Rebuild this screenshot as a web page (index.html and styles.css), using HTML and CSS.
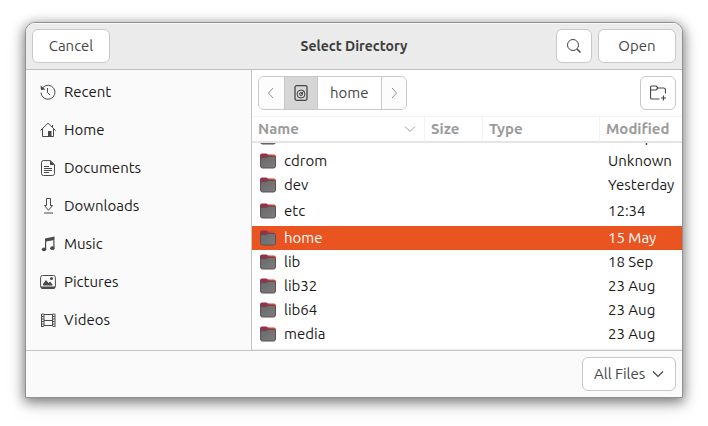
FILE: index.html
```html
<!DOCTYPE html>
<html lang="en">
<head>
<meta charset="utf-8">
<title>Select Directory</title>
<link rel="stylesheet" href="styles.css">
</head>
<body>
<svg class="defs" aria-hidden="true">
  <defs>
    <linearGradient id="tab" x1="0" x2="1"><stop offset="0.4" stop-color="#93304c"/><stop offset="0.6" stop-color="#c63a34"/><stop offset="1" stop-color="#e0562c"/></linearGradient>
    <linearGradient id="body" x1="0" y1="0" x2="1" y2="1"><stop offset="0" stop-color="#686868"/><stop offset="1" stop-color="#7d7d7d"/></linearGradient>
    <symbol id="folder" viewBox="0 0 16 16">
      <path d="M0 2.500Q0 .5 2 .5H6.500L8 1.500H14Q16 1.500 16 3.500V7H0Z" fill="url(#tab)"/>
      <path d="M.5 6Q.5 4.500 2 4.500H6.500L8 3.500H14.500Q15.500 3.500 15.500 4.500V13Q15.500 15 13.500 15H2.500Q.5 15 .5 13Z" fill="url(#body)" stroke="#5f5055"/>
    </symbol>
  </defs>
</svg>
<main class="dialog">
  <header class="titlebar">
    <button class="btn" type="button">Cancel</button>
    <h1 class="title">Select Directory</h1>
    <div class="actions">
      <button class="btn btn-icon" type="button" aria-label="Search">
        <svg class="icon" viewBox="0 0 16 16"><circle cx="7" cy="7" r="5.500"/><path d="M11 11l3.500 3.500" stroke-width="1.500"/></svg>
      </button>
      <button class="btn" type="button">Open</button>
    </div>
  </header>
  <div class="content">
    <nav class="sidebar" aria-label="Places">
      <a class="place" href="#recent"><svg class="icon" viewBox="0 0 16 16"><path d="M2.600 3.800A7 7 0 1 1 1 8.500M7.500 4v4.500l2.500 2.500"/><path class="solid" d="M.5 1.500L1 6l4.500-.5Z"/></svg>Recent</a>
      <a class="place" href="#home"><svg class="icon" viewBox="0 0 16 16"><path d="M.5 8.500L8 1.200l7.500 7.300M12.500 5V3M2.500 7v7.500H13.500V7"/><path class="solid" d="M8 9h3.500v6H8Z"/></svg>Home</a>
      <a class="place" href="#documents"><svg class="icon" viewBox="0 0 16 16"><path d="M3.500.6H10.500L14.500 4.500V13.500Q14.500 15.500 12.500 15.500H3.500Q1.500 15.500 1.500 13.500V2.500Q1.500.6 3.500.6ZM4 6.500h5M4 8.500h8M4 10.500h8M4 12.500h5"/><path class="solid" d="M10 .6L14.500 5H10Z"/></svg>Documents</a>
      <a class="place" href="#downloads"><svg class="icon" viewBox="0 0 16 16"><path d="M6.500.5h4v7h2L8.500 12.300 4.500 7.500h2ZM4 15h9"/></svg>Downloads</a>
      <a class="place" href="#music"><svg class="icon" viewBox="0 0 16 16"><path class="solid" d="M5 2.500L14.500.5V4L6.200 5.500V13H5ZM13.300 3h1.200v9h-1.200Z"/><ellipse class="solid" cx="4" cy="13.300" rx="2.200" ry="1.900"/><ellipse class="solid" cx="12.400" cy="12.200" rx="2.200" ry="1.900"/></svg>Music</a>
      <a class="place" href="#pictures"><svg class="icon" viewBox="0 0 16 16"><rect x=".6" y="1.500" width="14.800" height="12.500" rx="2"/><path class="solid" d="M.5 12.500H15.500Q15.500 15 13.500 15H2.500Q.5 15 .5 12.500ZM3 11.500V10l3-4 2.500 3L10 7.500l2.500 3v1Z"/><circle class="solid" cx="11.500" cy="4.500" r="1.500"/></svg>Pictures</a>
      <a class="place" href="#videos"><svg class="icon" viewBox="0 0 16 16"><path d="M4 2v12M12.500 2v12M4 2.500h8.500M4 8.500h8.500M4 13.500h8.500"/><path d="M1.500 2v13M15 2v13"/><path d="M2.800 1.500v14M13.700 1.500v14" stroke-width="2" stroke-dasharray="1 1.500"/></svg>Videos</a>
    </nav>
    <section class="browser">
      <div class="toolbar">
        <div class="pathbar">
          <button class="crumb arrow" type="button" aria-label="Back"><svg class="icon" viewBox="0 0 16 16"><path d="M10 3L5.500 8l4.500 5"/></svg></button>
          <button class="crumb disk" type="button" aria-label="Computer"><svg class="icon" viewBox="0 0 16 16"><rect x="2" y=".7" width="12" height="14.600" rx="1.500" stroke-width="1.300"/><circle cx="8" cy="9" r="4"/><circle cx="8" cy="9" r="1.500"/><path d="M8 9l3-3"/></svg></button>
          <button class="crumb" type="button">home</button>
          <button class="crumb arrow" type="button" aria-label="Forward"><svg class="icon" viewBox="0 0 16 16"><path d="M6 3L10.500 8l-4.500 5"/></svg></button>
        </div>
        <button class="btn btn-icon" type="button" aria-label="Create Folder">
          <svg class="icon" viewBox="0 0 16 16"><path d="M9.500 14H2Q.5 14 .5 12.500V2.500Q.5 1 2 1H6L8 3H13.500Q15.500 3 15.500 5V8.500M.5 5H6L8 3M13.500 10.500v5M11 13h5" stroke-width="1.200"/></svg>
        </button>
      </div>
      <div class="files">
        <table>
          <colgroup><col class="col-name"><col class="col-size"><col class="col-type"><col class="col-modified"></colgroup>
          <thead>
            <tr>
              <th scope="col"><span class="sorted">Name<svg class="icon" viewBox="0 0 16 16"><path d="M3 5.500L8 10.500l5-5"/></svg></span></th>
              <th scope="col">Size</th><th scope="col">Type</th><th scope="col">Modified</th>
            </tr>
          </thead>
          <tbody>
            <tr><td><span class="name"><svg class="folder"><use href="#folder"/></svg>boot</span></td><td></td><td></td><td>18 Sep</td></tr>
            <tr><td><span class="name"><svg class="folder"><use href="#folder"/></svg>cdrom</span></td><td></td><td></td><td>Unknown</td></tr>
            <tr><td><span class="name"><svg class="folder"><use href="#folder"/></svg>dev</span></td><td></td><td></td><td>Yesterday</td></tr>
            <tr class="tall"><td><span class="name"><svg class="folder"><use href="#folder"/></svg>etc</span></td><td></td><td></td><td>12:34</td></tr>
            <tr class="selected"><td><span class="name"><svg class="folder"><use href="#folder"/></svg>home</span></td><td></td><td></td><td>15 May</td></tr>
            <tr><td><span class="name"><svg class="folder"><use href="#folder"/></svg>lib</span></td><td></td><td></td><td>18 Sep</td></tr>
            <tr><td><span class="name"><svg class="folder"><use href="#folder"/></svg>lib32</span></td><td></td><td></td><td>23 Aug</td></tr>
            <tr><td><span class="name"><svg class="folder"><use href="#folder"/></svg>lib64</span></td><td></td><td></td><td>23 Aug</td></tr>
            <tr><td><span class="name"><svg class="folder"><use href="#folder"/></svg>media</span></td><td></td><td></td><td>23 Aug</td></tr>
          </tbody>
        </table>
      </div>
    </section>
  </div>
  <footer class="footer">
    <div class="filter">
      <select class="btn" aria-label="File filter"><option>All Files</option></select>
      <svg class="icon" viewBox="0 0 16 16"><path d="M3 5.500L8 10.500l5-5" stroke-width="1.200"/></svg>
    </div>
  </footer>
</main>
</body>
</html>
```
FILE: styles.css
```css
* { box-sizing: border-box; }

body {
  margin: 0;
  height: 100vh;
  padding: 22px 25px 28px;
  display: flex;
  background: #fff;
  color: #1a1a1a;
  font: 15px/20px Ubuntu, "Noto Sans", sans-serif;
}

button, select { font: inherit; }

.defs { position: absolute; width: 0; height: 0; }

.icon {
  width: 16px;
  height: 16px;
  flex: none;
  display: block;
  fill: none;
  stroke: currentColor;
  stroke-width: 1;
}
.icon .solid { fill: currentColor; stroke: none; }

.dialog {
  flex: 1;
  min-width: 0;
  display: flex;
  flex-direction: column;
  overflow: hidden;
  border: 1px solid #919191;
  border-radius: 10px 10px 0 0;
  background: #fafafa;
  box-shadow: 0 3px 12px 1px rgba(0, 0, 0, 0.45), 0 6px 20px rgba(0, 0, 0, 0.15);
}

.btn {
  height: 34px;
  padding: 0 20px;
  border: 1px solid #c8c8c8;
  border-radius: 6px;
  background: #fff;
  color: #464646;
}
.btn-icon { width: 36px; padding: 0 9px; }

.titlebar {
  display: grid;
  grid-template-columns: 1fr auto 1fr;
  align-items: center;
  height: 47px;
  flex: none;
  padding: 0 6px;
  background: #ebebeb;
  border-bottom: 1px solid #bfbfbf;
  box-shadow: inset 0 1px #f8f8f8;
}
.titlebar > .btn { justify-self: start; width: 78px; padding: 0; }
.title { margin: 0; font-size: 14px; font-weight: 700; color: #3d3d3d; }
.actions { display: flex; justify-content: flex-end; gap: 6px; }
.actions .btn:last-child { width: 78px; padding: 0; }

.content { flex: 1; min-height: 0; display: flex; }

.sidebar {
  flex: 0 0 226px;
  padding-top: 3px;
  border-right: 1px solid #c4c4c4;
}
.place {
  display: flex;
  align-items: center;
  gap: 8px;
  height: 38px;
  padding-left: 14px;
  color: inherit;
  text-decoration: none;
}
.place .icon { color: #4a4a4a; }

.browser {
  flex: 1;
  min-width: 0;
  display: flex;
  flex-direction: column;
  background: #fff;
}
.toolbar {
  display: flex;
  justify-content: space-between;
  padding: 6px;
}

.pathbar {
  display: flex;
  height: 34px;
  overflow: hidden;
  border: 1px solid #c8c8c8;
  border-radius: 6px;
}
.crumb {
  padding: 0 12px;
  border: 0;
  border-left: 1px solid #c8c8c8;
  background: #fff;
  color: #464646;
}
.crumb:first-child { border-left: 0; }
.crumb.arrow { padding: 0 4px; width: 25px; background: #fcfcfc; color: #929292; }
.crumb.disk { padding: 0 8px; background: #d6d6d6; }

/* Reversed so the list opens scrolled to its last row. */
.files {
  flex: 1;
  min-height: 0;
  display: flex;
  flex-direction: column-reverse;
  overflow-y: auto;
  scrollbar-width: none;
  border-bottom: 1px solid #ececec;
}
table {
  width: 100%;
  flex: none;
  table-layout: fixed;
  border-spacing: 0;
  margin-bottom: 3px;
}
.col-name { width: 173px; }
.col-size { width: 58px; }
.col-modified { width: 82px; }

th {
  position: sticky;
  top: 0;
  height: 27px;
  padding: 0 0 0 6px;
  background: #fff;
  border-top: 1px solid #f5f5f5;
  border-bottom: 2px solid #e4e4e4;
  border-right: 1px solid #f3f3f3;
  text-align: left;
  color: #9b9b9b;
}
th:last-child { border-right: 0; }
.sorted { display: flex; align-items: center; justify-content: space-between; padding-right: 6px; }

td { height: 24px; padding: 0; white-space: nowrap; }
td:first-child, td:last-child { padding-left: 8px; }
.tall td { height: 29px; padding-bottom: 2px; }
.selected { background: #e95420; color: #fff; }
.name { display: flex; align-items: center; gap: 8px; }
.folder { width: 16px; height: 16px; flex: none; }

.footer {
  display: flex;
  justify-content: flex-end;
  flex: none;
  padding: 6px;
  border-top: 1px solid #c4c4c4;
}
.filter { display: grid; align-items: center; }
.filter > * { grid-area: 1 / 1; }
.filter .btn { appearance: none; width: 94px; padding: 0 11px; }
.filter .icon { justify-self: end; margin-right: 10px; color: #464646; pointer-events: none; }
```
